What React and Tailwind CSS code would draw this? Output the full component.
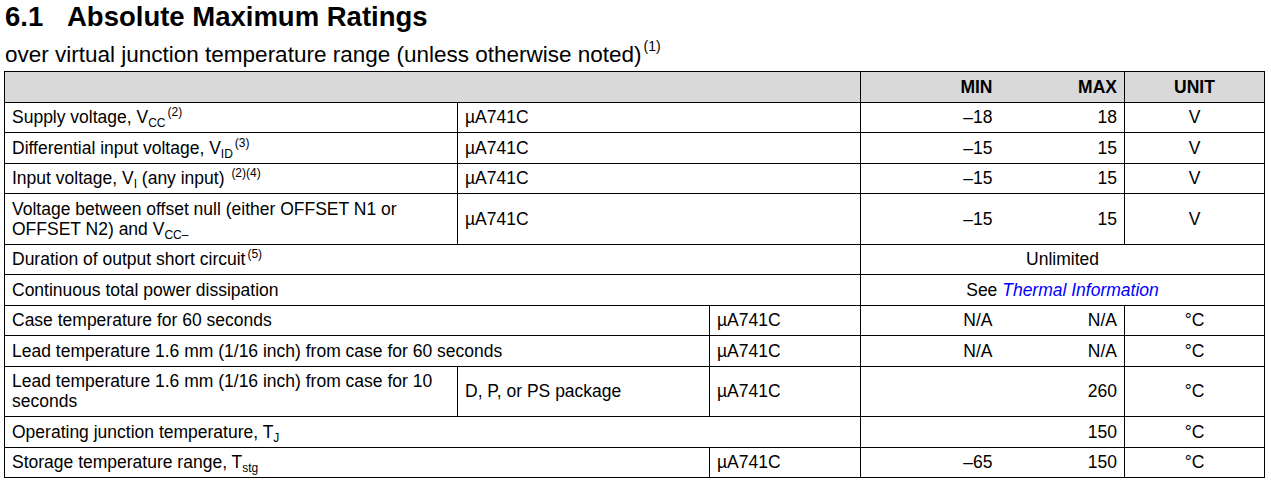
const cell = "border border-black px-[7px] py-[4.75px] leading-[20px] align-middle";
const num = `${cell} text-right`;
const unit = `${cell} text-center`;

function Sup({ children }) {
  return <sup className="text-[12px] leading-none relative -top-[7px] ml-[2px]">{children}</sup>;
}

function Sub({ children }) {
  return <sub className="text-[12px] leading-none relative top-[4px]">{children}</sub>;
}

export default function App() {
  return (
    <div className="bg-white text-black pl-[4px] pr-[8px]" style={{ fontFamily: '"Liberation Sans", Arial, sans-serif' }}>
      <h1 className="text-[27.5px] font-bold leading-[32px] pt-[1px] flex">
        <span className="w-[63px] pl-[1px]">6.1</span>
        <span>Absolute Maximum Ratings</span>
      </h1>
      <p className="text-[22.5px] leading-[28px] pt-[8px] pb-[2px] pl-[1px]">
        over virtual junction temperature range (unless otherwise noted)
        <sup className="text-[14px] leading-none relative -top-[11px] ml-[2px]">(1)</sup>
      </p>
      <table className="table-fixed border-collapse text-[17.5px] w-[1260px]">
        <colgroup>
          <col className="w-[453px]" />
          <col className="w-[252px]" />
          <col className="w-[151px]" />
          <col className="w-[139px]" />
          <col className="w-[125px]" />
          <col className="w-[140px]" />
        </colgroup>
        <thead>
          <tr className="bg-[#d9d9d9] font-bold">
            <th colSpan={3} className={cell}></th>
            <th className={`${num} border-r-0`}>MIN</th>
            <th className={`${num} border-l-0`}>MAX</th>
            <th className={unit}>UNIT</th>
          </tr>
        </thead>
        <tbody>
          <tr>
            <td className={cell}>
              Supply voltage, V<Sub>CC</Sub>
              <Sup>(2)</Sup>
            </td>
            <td colSpan={2} className={cell}>µA741C</td>
            <td className={`${num} border-r-0`}>–18</td>
            <td className={`${num} border-l-0`}>18</td>
            <td className={unit}>V</td>
          </tr>
          <tr>
            <td className={cell}>
              Differential input voltage, V<Sub>ID</Sub>
              <Sup>(3)</Sup>
            </td>
            <td colSpan={2} className={cell}>µA741C</td>
            <td className={`${num} border-r-0`}>–15</td>
            <td className={`${num} border-l-0`}>15</td>
            <td className={unit}>V</td>
          </tr>
          <tr>
            <td className={cell}>
              Input voltage, V<Sub>I</Sub> (any input) <Sup>(2)(4)</Sup>
            </td>
            <td colSpan={2} className={cell}>µA741C</td>
            <td className={`${num} border-r-0`}>–15</td>
            <td className={`${num} border-l-0`}>15</td>
            <td className={unit}>V</td>
          </tr>
          <tr>
            <td className={`${cell} pr-[20px]`}>
              Voltage between offset null (either OFFSET N1 or OFFSET N2) and V<Sub>CC–</Sub>
            </td>
            <td colSpan={2} className={cell}>µA741C</td>
            <td className={`${num} border-r-0`}>–15</td>
            <td className={`${num} border-l-0`}>15</td>
            <td className={unit}>V</td>
          </tr>
          <tr>
            <td colSpan={3} className={cell}>
              Duration of output short circuit<Sup>(5)</Sup>
            </td>
            <td colSpan={3} className={unit}>Unlimited</td>
          </tr>
          <tr>
            <td colSpan={3} className={cell}>Continuous total power dissipation</td>
            <td colSpan={3} className={unit}>
              See <span className="italic text-[#0000ff]">Thermal Information</span>
            </td>
          </tr>
          <tr>
            <td colSpan={2} className={cell}>Case temperature for 60 seconds</td>
            <td className={cell}>µA741C</td>
            <td className={`${num} border-r-0`}>N/A</td>
            <td className={`${num} border-l-0`}>N/A</td>
            <td className={unit}>°C</td>
          </tr>
          <tr>
            <td colSpan={2} className={cell}>Lead temperature 1.6 mm (1/16 inch) from case for 60 seconds</td>
            <td className={cell}>µA741C</td>
            <td className={`${num} border-r-0`}>N/A</td>
            <td className={`${num} border-l-0`}>N/A</td>
            <td className={unit}>°C</td>
          </tr>
          <tr>
            <td className={`${cell} pr-[20px]`}>Lead temperature 1.6 mm (1/16 inch) from case for 10 seconds</td>
            <td className={cell}>D, P, or PS package</td>
            <td className={cell}>µA741C</td>
            <td className={`${num} border-r-0`}></td>
            <td className={`${num} border-l-0`}>260</td>
            <td className={unit}>°C</td>
          </tr>
          <tr>
            <td colSpan={3} className={cell}>
              Operating junction temperature, T<Sub>J</Sub>
            </td>
            <td className={`${num} border-r-0`}></td>
            <td className={`${num} border-l-0`}>150</td>
            <td className={unit}>°C</td>
          </tr>
          <tr>
            <td colSpan={2} className={cell}>
              Storage temperature range, T<Sub>stg</Sub>
            </td>
            <td className={cell}>µA741C</td>
            <td className={`${num} border-r-0`}>–65</td>
            <td className={`${num} border-l-0`}>150</td>
            <td className={unit}>°C</td>
          </tr>
        </tbody>
      </table>
    </div>
  );
}
